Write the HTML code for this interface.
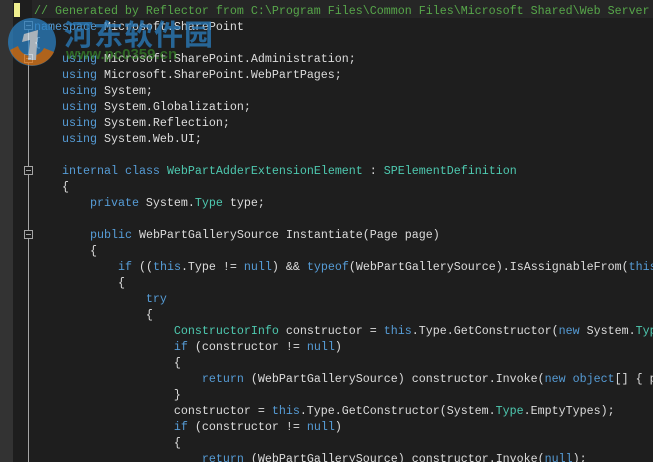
<!DOCTYPE html>
<html><head><meta charset="utf-8"><style>
html,body{margin:0;padding:0;width:653px;height:462px;overflow:hidden;background:#1e1e1e;position:relative}
.g{position:absolute;left:0;top:0;width:13px;height:462px;background:#333}
.y{position:absolute;left:14px;top:3px;width:6px;height:14px;background:#efef8f}
.band{position:absolute;left:32px;top:0;width:621px;height:18px;background:#262626}
.vl{position:absolute;left:28px;width:1px;background:#a5a5a5}
.fb{position:absolute;left:24px;width:7px;height:7px;border:1px solid #a5a5a5;background:#1e1e1e}
.fb:after{content:"";position:absolute;left:1px;top:3px;width:5px;height:1px;background:#a5a5a5}
pre{position:absolute;left:34px;top:3px;width:619px;height:459px;overflow:hidden;margin:0;font-family:"Liberation Mono",monospace;font-size:11.67px;line-height:16px;color:#dcdcdc;white-space:pre}
.k{color:#569cd6}.t{color:#4ec9b0}.c{color:#57a64a}
.wm{position:absolute;font-family:"Liberation Sans","Noto Sans CJK SC",sans-serif;font-weight:bold}
</style></head><body>
<div class="g"></div><div class="y"></div><div class="band"></div>
<div class="vl" style="top:30px;height:432px"></div>
<div class="fb" style="top:21px"></div>
<div class="fb" style="top:54px"></div>
<div class="fb" style="top:166px"></div>
<div class="fb" style="top:230px"></div>
<pre><span class="c">// Generated by Reflector from C:\Program Files\Common Files\Microsoft Shared\Web Server Extensions</span>
<span class="k">namespace</span> Microsoft.SharePoint
{
    <span class="k">using</span> Microsoft.SharePoint.Administration;
    <span class="k">using</span> Microsoft.SharePoint.WebPartPages;
    <span class="k">using</span> System;
    <span class="k">using</span> System.Globalization;
    <span class="k">using</span> System.Reflection;
    <span class="k">using</span> System.Web.UI;

    <span class="k">internal</span> <span class="k">class</span> <span class="t">WebPartAdderExtensionElement</span> : <span class="t">SPElementDefinition</span>
    {
        <span class="k">private</span> System.<span class="t">Type</span> type;

        <span class="k">public</span> WebPartGallerySource Instantiate(Page page)
        {
            <span class="k">if</span> ((<span class="k">this</span>.Type != <span class="k">null</span>) &amp;&amp; <span class="k">typeof</span>(WebPartGallerySource).IsAssignableFrom(<span class="k">this</span>.Type))
            {
                <span class="k">try</span>
                {
                    <span class="t">ConstructorInfo</span> constructor = <span class="k">this</span>.Type.GetConstructor(<span class="k">new</span> System.<span class="t">Type</span>[] { <span class="k">typeof</span>(Page) });
                    <span class="k">if</span> (constructor != <span class="k">null</span>)
                    {
                        <span class="k">return</span> (WebPartGallerySource) constructor.Invoke(<span class="k">new</span> <span class="k">object</span>[] { page });
                    }
                    constructor = <span class="k">this</span>.Type.GetConstructor(System.<span class="t">Type</span>.EmptyTypes);
                    <span class="k">if</span> (constructor != <span class="k">null</span>)
                    {
                        <span class="k">return</span> (WebPartGallerySource) constructor.Invoke(<span class="k">null</span>);</pre>
<svg style="position:absolute;left:4px;top:12px;opacity:.75" width="60" height="56" viewBox="0 0 60 56">
<circle cx="28" cy="30" r="24" fill="#2a7fc0"/>
<path d="M6 38 A24 24 0 0 0 50 40 L40 36 A14 14 0 0 1 14 34 Z" fill="#e07a1c"/>
<path d="M20 22 L34 18 L32 48 L24 48 L26 28 L18 30 Z" fill="#d8e4ee"/>
</svg>
<div class="wm" style="left:64px;top:12px;font-size:29px;color:#2a7fc0;opacity:.75;letter-spacing:1px">河东软件园</div>
<div class="wm" style="left:66px;top:46px;font-size:15px;color:#3c9a2c;opacity:.6">www.pc0359.cn</div>
</body></html>
